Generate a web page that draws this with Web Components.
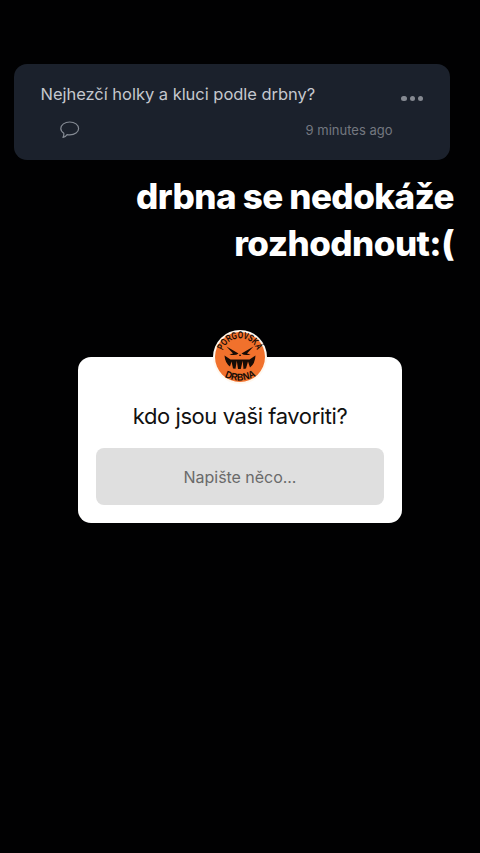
<!DOCTYPE html>
<html lang="cs"><head><meta charset="utf-8"><title>Story</title>
<style>html,body{margin:0;background:#010102}body{font-family:Inter,"Liberation Sans",sans-serif}</style></head><body>
<story-page></story-page>
<script>
const define=(name,html)=>customElements.define(name,class extends HTMLElement{
  constructor(){super();this.attachShadow({mode:'open'}).innerHTML=html;}
});
define('comment-icon',`<style>:host{display:block;width:20px;height:18px}svg{display:block}</style>
<svg width="20" height="18" viewBox="0 0 20 18" fill="none" stroke="#858b94" stroke-width="1.2" stroke-linejoin="round"><path d="M3.800 12.200C1.900 11 .8 9.500.8 7.600.8 3.800 4.700 1 9.700 1s8.900 2.800 8.900 6.500-3.900 6.400-8.900 6.400c-1 0-1.800-.1-2.600-.3C6.200 14.900 4.800 16 3 16.500c.8-1.300 1-2.700.8-4.300Z"/></svg>`);
define('more-icon',`<style>:host{display:flex;gap:3px}i{width:5.200px;height:5.200px;border-radius:50%;background:#858991}</style><i></i><i></i><i></i>`);
define('post-card',`<style>
:host{display:flex;flex-direction:column;box-sizing:border-box;width:436px;height:95.500px;margin-left:14px;padding:19px 27px 0 26.500px;border-radius:13px;background:#1b212c}
.top{display:flex;justify-content:space-between;height:22px;line-height:22px;font-size:16.500px;letter-spacing:-.03px;color:#c5c8ce;white-space:nowrap}
more-icon{margin-top:12.500px}
.bottom{display:flex;justify-content:space-between;align-items:center;margin-top:16px;height:18px;padding:0 30.500px 0 19.500px;font-size:13px;color:#747880}
</style><div class="top"><slot name="title"></slot><more-icon></more-icon></div>
<div class="bottom"><comment-icon></comment-icon><span><slot name="time"></slot></span></div>`);
define('story-caption',`<style>:host{display:block;margin:13.500px 26px 0 0;text-align:right;color:#fff;font-size:35px;line-height:46.500px;font-weight:800;letter-spacing:-.55px;word-spacing:-.5px;white-space:nowrap}</style><slot></slot>`);
define('brand-avatar',`<style>:host{display:block;width:54px;height:54px}svg{display:block}text{font:700 10px "Liberation Sans",sans-serif;fill:#160c06}</style>
<svg width="54" height="54" viewBox="0 0 54 54"><circle cx="27" cy="27" r="27" fill="#fff8ef"/><circle cx="27" cy="27" r="25" fill="#f1712c"/>
<defs><path id="up" d="M10 20.500A18 18 0 0 1 44.500 22"/><path id="down" d="M10.500 46.500Q27 55 43.500 45.500"/></defs>
<text textLength="44" lengthAdjust="spacingAndGlyphs"><textPath href="#up" startOffset="0">PORGOVSKÁ</textPath></text>
<text textLength="33" lengthAdjust="spacingAndGlyphs"><textPath href="#down" startOffset="1">DRBNA</textPath></text>
<g fill="#160c06"><path d="M13.500 16.500 25.500 23.500Q22.500 26 16.500 24.500L20 23.500ZM40.500 16.500 28.500 23.500Q31.500 26 37.500 24.500L34 23.500ZM26 26l1-2 1.200 2Z"/>
<path d="M11.500 25.500 17.500 29.500H36.500L42.500 25.500Q42 34 37 37.500L35 31.500 33 38.500 30.500 39 29.700 30.800 27.800 39H25L23.800 30.800 22.500 38.800 20 38.500 18.500 31.500 17 36.500Q12 33 11.500 25.500Z"/></g></svg>`);
define('question-card',`<style>
:host{display:flex;flex-direction:column;align-items:center;box-sizing:border-box;width:324px;height:166px;margin:90.500px auto 0;padding:0 18px;border-radius:13px;background:#fff}
brand-avatar{margin-top:-27px;flex:none}
.q{margin-top:16px;height:32px;line-height:32px;font-size:22px;letter-spacing:-.42px;color:#111;white-space:nowrap}
.field{box-sizing:border-box;align-self:stretch;display:flex;align-items:center;justify-content:center;margin-top:16px;height:57px;padding-top:1px;border-radius:8px;background:#dfdfdf;color:#6a6a6a;font-size:16px;letter-spacing:-.04px;white-space:nowrap}
</style><brand-avatar></brand-avatar><div class="q"><slot></slot></div><div class="field"><slot name="placeholder"></slot></div>`);
define('story-page',`<style>:host{display:flex;flex-direction:column;box-sizing:border-box;width:480px;height:853px;padding-top:64px;background:#010102;overflow:hidden}</style>
<post-card><span slot="title">Nejhezčí holky a kluci podle drbny?</span><span slot="time">9 minutes ago</span></post-card>
<story-caption>drbna se nedokáže<br>rozhodnout:(</story-caption>
<question-card>kdo jsou vaši favoriti?<span slot="placeholder">Napište něco...</span></question-card>`);
</script></body></html>
